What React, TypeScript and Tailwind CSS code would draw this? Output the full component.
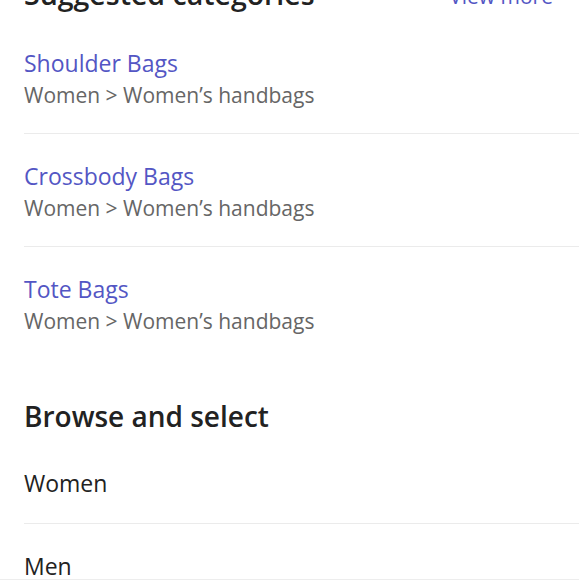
const suggestions = [
  { name: 'Shoulder Bags', path: 'Women > Women’s handbags' },
  { name: 'Crossbody Bags', path: 'Women > Women’s handbags' },
  { name: 'Tote Bags', path: 'Women > Women’s handbags' },
];

const departments = ['Women', 'Men'];

export default function App() {
  return (
    <div
      className="h-[580px] overflow-hidden bg-white border-b border-[#ededed]"
      style={{ fontFamily: '"Open Sans", "Noto Sans", sans-serif' }}
    >
      <div className="-mt-[24px] pl-6 pr-[26px] flex items-end justify-between">
        <h2 className="text-[28.5px] leading-[36px] font-semibold text-[#222]">Suggested categories</h2>
        <button className="text-[21px] leading-[32px] text-[#5356c4]">View more</button>
      </div>

      <ul className="pl-6 mt-[9px]">
        {suggestions.map((s, i) => (
          <li
            key={s.name}
            className={`pt-[26px] pb-[22px] ${i < suggestions.length - 1 ? 'border-b border-[#ebebeb]' : ''}`}
          >
            <div className="text-[23px] leading-[32px] text-[#5356c4]">{s.name}</div>
            <div className="text-[21px] leading-[32px] text-[#666]">{s.path}</div>
          </li>
        ))}
      </ul>

      <div className="pl-6 mt-[39px]">
        <h2 className="text-[28px] leading-[36px] font-semibold text-[#222]">Browse and select</h2>
        <ul className="mt-[7px]">
          {departments.map((d, i) => (
            <li
              key={d}
              className={`pt-[26px] pb-[24px] ${i < departments.length - 1 ? 'border-b border-[#ebebeb]' : ''}`}
            >
              <div className="text-[23px] leading-[32px] text-[#222]">{d}</div>
            </li>
          ))}
        </ul>
      </div>
    </div>
  );
}
